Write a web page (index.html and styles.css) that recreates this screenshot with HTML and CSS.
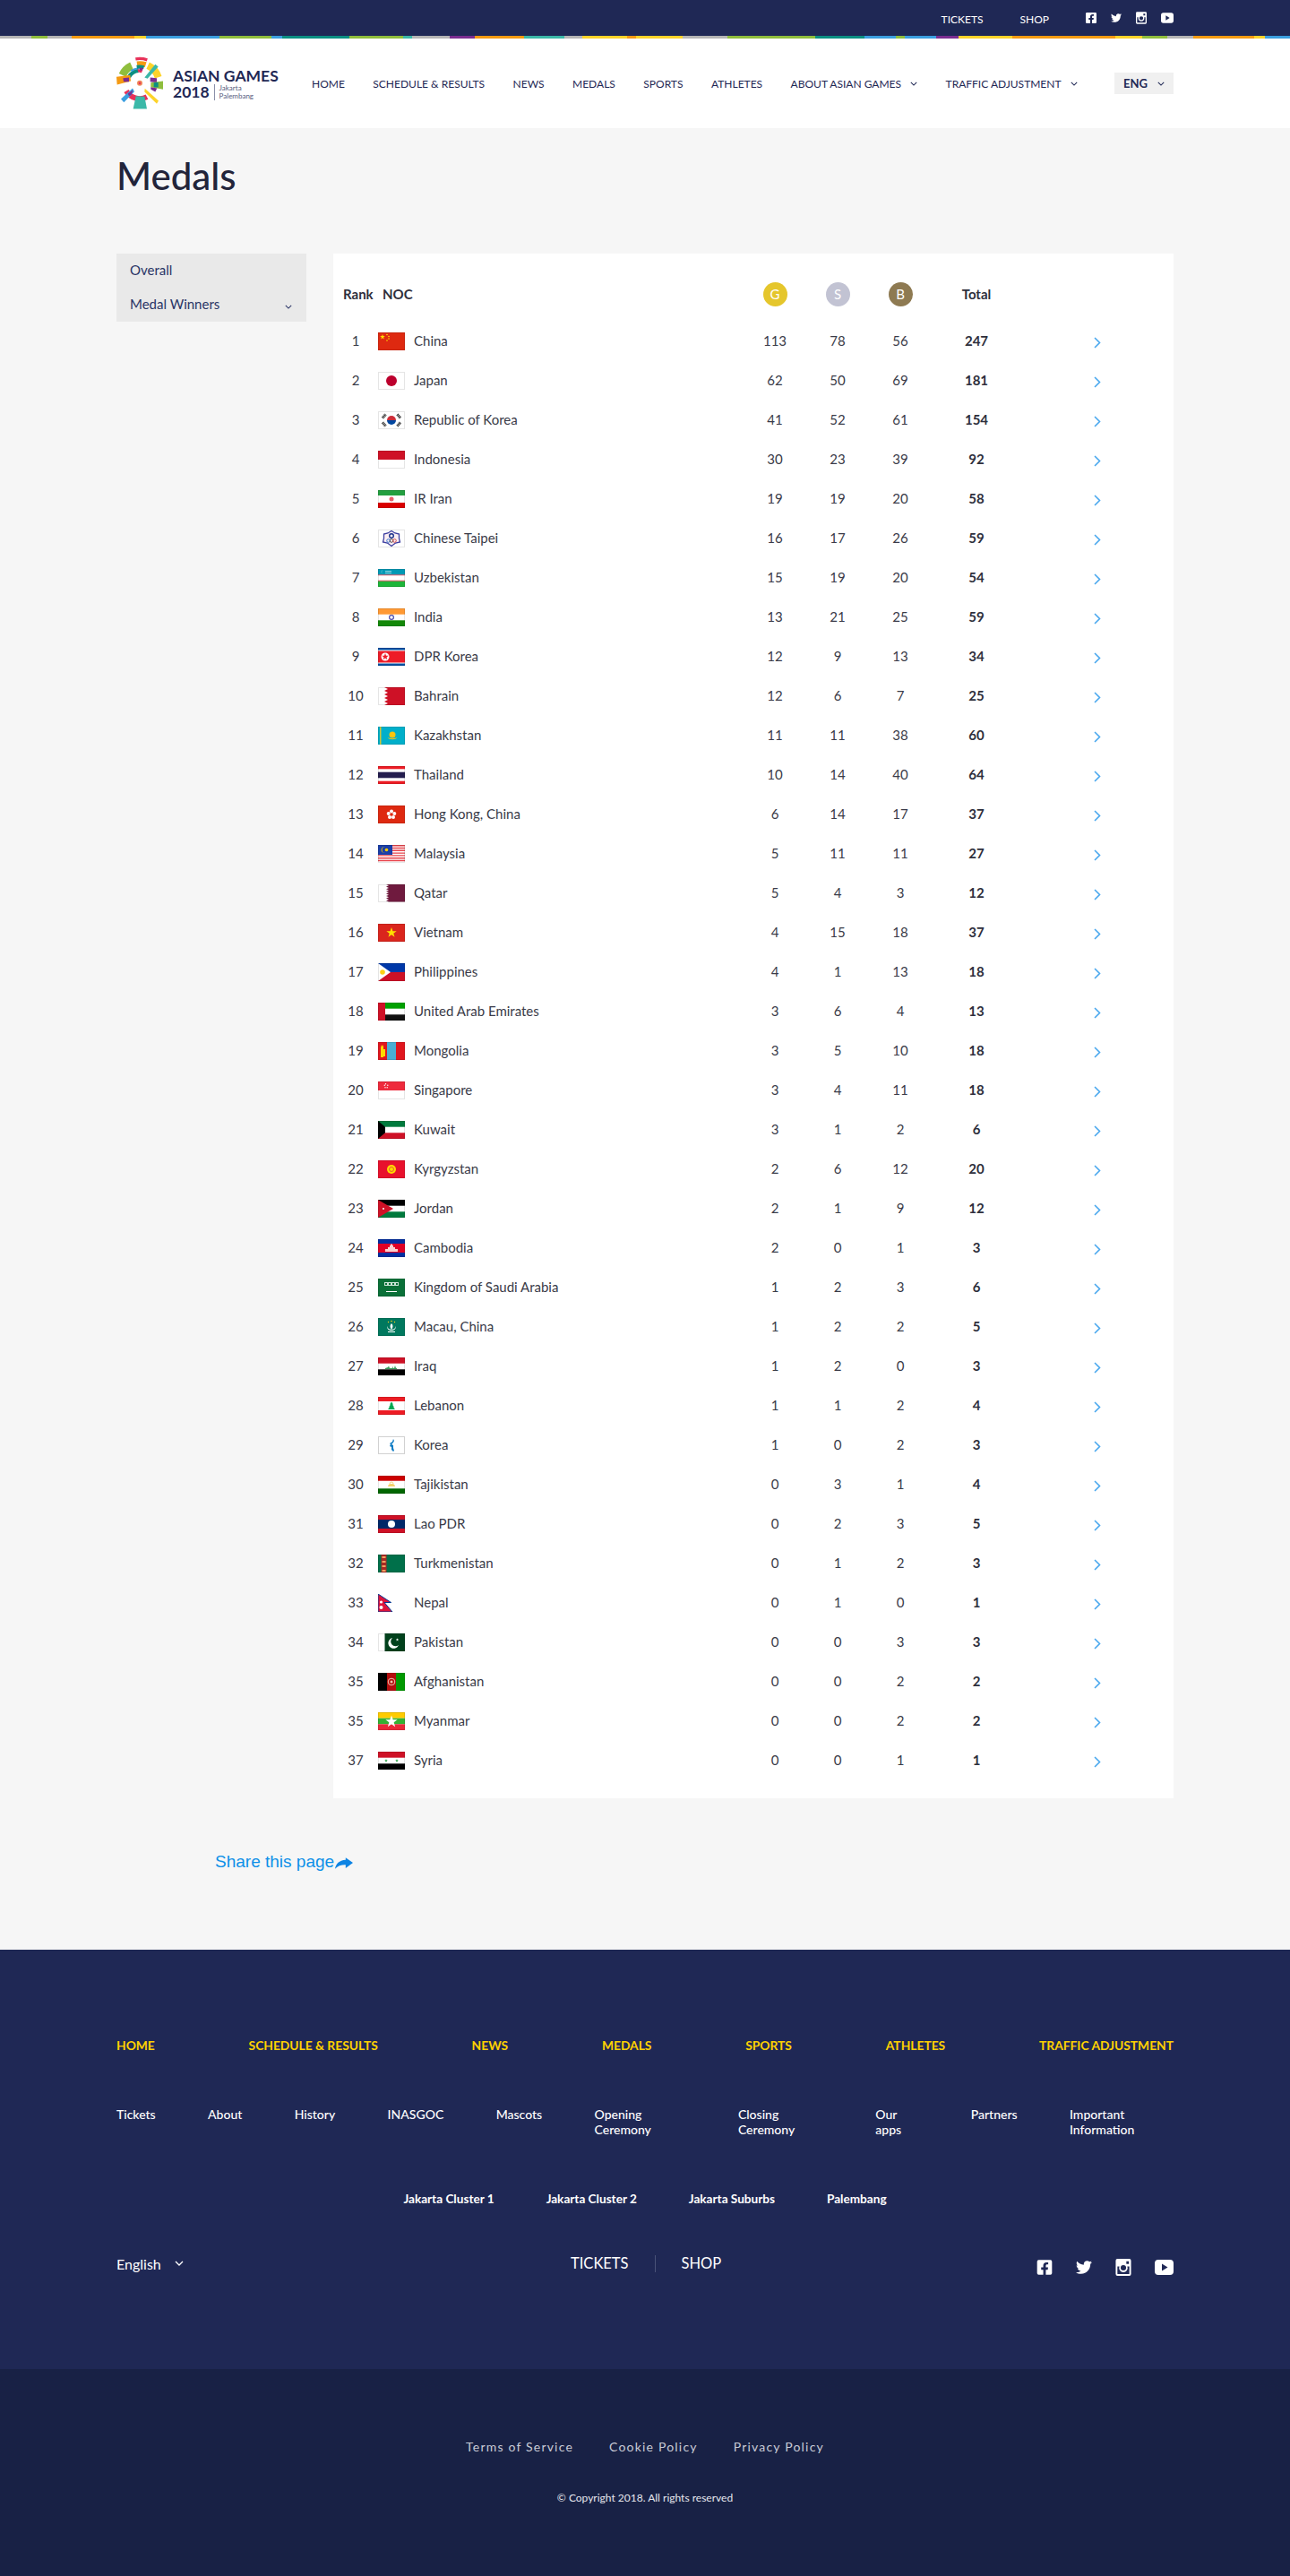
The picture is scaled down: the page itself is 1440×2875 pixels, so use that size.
FILE: index.html
```html
<!DOCTYPE html>
<html lang="en">
<head>
    <meta charset="UTF-8">
    <meta name="viewport" content="width=device-width, initial-scale=1.0">
    <title>Medals - Asian Games 2018</title>
    <link rel="stylesheet" href="styles.css">
</head>
<body>
    <svg class="sprite" xmlns="http://www.w3.org/2000/svg">
        <defs>
            <polygon id="star" points="0,-1 .24,-.31 .95,-.31 .38,.12 .59,.81 0,.38 -.59,.81 -.38,.12 -.95,-.31 -.24,-.31"/>
        </defs>
        <symbol id="i-fb" viewBox="0 0 448 512"><path d="M400 32H48A48 48 0 0 0 0 80v352a48 48 0 0 0 48 48h137.25V327.69h-63V256h63v-54.64c0-62.15 37-96.48 93.67-96.48 27.14 0 55.52 4.84 55.52 4.84v61h-31.27c-30.81 0-40.42 19.12-40.42 38.73V256h68.78l-11 71.69h-57.78V480H400a48 48 0 0 0 48-48V80a48 48 0 0 0-48-48z"/></symbol>
        <symbol id="i-tw" viewBox="0 0 512 512"><path d="M459.37 151.716c.325 4.548.325 9.097.325 13.645 0 138.72-105.583 298.558-298.558 298.558-59.452 0-114.68-17.219-161.137-47.106 8.447.974 16.568 1.299 25.34 1.299 49.055 0 94.213-16.568 130.274-44.832-46.132-.975-84.792-31.188-98.112-72.772 6.498.974 12.995 1.624 19.818 1.624 9.421 0 18.843-1.3 27.614-3.573-48.081-9.747-84.143-51.98-84.143-102.985v-1.299c13.969 7.797 30.214 12.67 47.431 13.319-28.264-18.843-46.781-51.005-46.781-87.391 0-19.492 5.197-37.36 14.294-52.954 51.655 63.675 129.3 105.258 216.365 109.807-1.624-7.797-2.599-15.918-2.599-24.04 0-57.828 46.782-104.934 104.934-104.934 30.213 0 57.502 12.67 76.67 33.137 23.715-4.548 46.456-13.32 66.599-25.34-7.798 24.366-24.366 44.833-46.132 57.827 21.117-2.273 41.584-8.122 60.426-16.243-14.292 20.791-32.161 39.308-52.628 54.253z"/></symbol>
        <symbol id="i-ig" viewBox="0 0 18 20"><path fill-rule="evenodd" d="M2 0h14a2 2 0 0 1 2 2v16a2 2 0 0 1-2 2H2a2 2 0 0 1-2-2V2a2 2 0 0 1 2-2zM12.500 3v3h3V3zM2 9v8.500a.5.5 0 0 0 .5.5h13a.5.5 0 0 0 .5-.5V9h-2.300a5 5 0 1 1-9.400 0zM9 7.300a3.200 3.200 0 1 0 0 6.400 3.200 3.200 0 0 0 0-6.400z"/></symbol>
        <symbol id="i-yt" viewBox="0 0 21 17"><path fill-rule="evenodd" d="M4 0h13a4 4 0 0 1 4 4v9a4 4 0 0 1-4 4H4a4 4 0 0 1-4-4V4a4 4 0 0 1 4-4zM8 4.500v8l6.500-4z"/></symbol>
        <symbol id="i-down" viewBox="0 0 10 6"><path d="M1 1l4 4 4-4" fill="none" stroke="currentColor" stroke-width="1.300"/></symbol>
        <symbol id="i-go" viewBox="0 0 8 13"><path d="M1 1l5.500 5.500L1 12" fill="none" stroke="currentColor" stroke-width="1.600"/></symbol>
    </svg>

    <div class="topbar">
        <div class="wrap topbar-in">
            <a class="top-link">TICKETS</a>
            <a class="top-link">SHOP</a>
            <div class="top-social">
                <svg class="ic-top"><use href="#i-fb"/></svg>
                <svg class="ic-top"><use href="#i-tw"/></svg>
                <svg class="ic-top"><use href="#i-ig"/></svg>
                <svg class="ic-top ic-top-yt"><use href="#i-yt"/></svg>
            </div>
        </div>
    </div>
    <div class="strip"></div>

    <header class="header">
        <div class="wrap header-in">
            <a class="logo">
                <svg class="logo-mark" viewBox="30 35 165 185">
                    <g fill="none">
                        <path stroke="#fdd32a" stroke-width="24" d="M135.500 68A65 65 0 0 1 170 107"/>
                        <path stroke="#f59a12" stroke-width="18" d="M99 63A65 65 0 0 1 128 65"/>
                        <path stroke="#e8325a" stroke-width="10" d="M94 46A82 82 0 0 1 133 49"/>
                        <path stroke="#8fbe3d" stroke-width="26" d="M50 100A64 64 0 0 1 81 69"/>
                        <path stroke="#0b8f82" stroke-width="13" d="M72 106A42 42 0 0 1 104 85"/>
                        <path stroke="#3b9fe0" stroke-width="6" d="M79 86A50 50 0 0 1 104 77"/>
                        <path stroke="#0b8f82" stroke-width="12" d="M98 73A55 55 0 0 1 122 74"/>
                        <path stroke="#e8325a" stroke-width="18" d="M132 173A52 52 0 0 1 63 153"/>
                    </g>
                    <polygon fill="#e8325a" points="100,80 118,82 114,92 103,90"/>
                    <polygon fill="#7b2d90" points="106,76 120,76 117,84 108,84"/>
                    <polygon fill="#3bb8a8" points="124,108 160,64 170,72 134,112"/>
                    <polygon fill="#f59a12" points="30,106 76,100 78,120 32,132"/>
                    <polygon fill="#7b2d90" points="52,110 72,108 72,122 54,122"/>
                    <polygon fill="#7b2d90" points="143,108 165,110 165,125 143,122"/>
                    <polygon fill="#8fbe3d" points="145,125 186,120 186,148 145,140"/>
                    <polygon fill="#0b8f82" points="155,125 170,124 170,141 155,140"/>
                    <polygon fill="#7b2d90" points="145,140 166,144 160,156 145,148"/>
                    <polygon fill="#3bb8a8" points="95,170 124,172 132,213 86,213"/>
                    <polygon fill="#3b9fe0" points="45,180 84,144 90,155 55,191"/>
                    <polygon fill="#7b2d90" points="68,162 85,150 80,166 72,170"/>
                    <polygon fill="#fdd32a" points="125,145 171,186 165,196 124,156"/>
                    <circle cx="108" cy="127" r="9" fill="#f08a5a"/>
                    <circle cx="108" cy="127" r="4" fill="#e8325a"/>
                </svg>
                <div class="logo-text">
                    <div class="logo-name">ASIAN GAMES</div>
                    <div class="logo-sub">
                        <span class="logo-year">2018</span>
                        <span class="logo-city">Jakarta<br>Palembang</span>
                    </div>
                </div>
            </a>
            <nav class="nav">
                <a>HOME</a>
                <a>SCHEDULE &amp; RESULTS</a>
                <a>NEWS</a>
                <a>MEDALS</a>
                <a>SPORTS</a>
                <a>ATHLETES</a>
                <a class="nav-more">ABOUT ASIAN GAMES <svg class="ic-down"><use href="#i-down"/></svg></a>
                <a class="nav-more">TRAFFIC ADJUSTMENT <svg class="ic-down"><use href="#i-down"/></svg></a>
            </nav>
            <div class="lang">ENG <svg class="ic-down"><use href="#i-down"/></svg></div>
        </div>
    </header>

    <main class="main">
        <div class="wrap">
            <h1 class="title">Medals</h1>
            <div class="columns">
                <aside class="side">
                    <a class="side-item">Overall</a>
                    <a class="side-item">Medal Winners <svg class="ic-down"><use href="#i-down"/></svg></a>
                </aside>
                <section class="card">
                    <div class="row row-head">
                        <div class="head-rank">Rank</div>
                        <div class="head-noc">NOC</div>
                        <div></div>
                        <div class="num"><span class="medal gold">G</span></div>
                        <div class="num"><span class="medal silver">S</span></div>
                        <div class="num"><span class="medal bronze">B</span></div>
                        <div class="num total">Total</div>
                        <div></div>
                    </div>

                    <div class="row">
                        <div class="num">1</div>
                        <svg class="flag" viewBox="0 0 30 20"><rect width="30" height="20" fill="#de2910"/><use href="#star" transform="translate(5 5) scale(3)" fill="#ffde00"/><circle cx="10" cy="2.500" r=".8" fill="#ffde00"/><circle cx="12" cy="4.500" r=".8" fill="#ffde00"/><circle cx="12" cy="7" r=".8" fill="#ffde00"/><circle cx="10" cy="9" r=".8" fill="#ffde00"/></svg>
                        <div class="name">China</div>
                        <div class="num">113</div><div class="num">78</div><div class="num">56</div><div class="num total">247</div>
                        <svg class="ic-go"><use href="#i-go"/></svg>
                    </div>
                    <div class="row">
                        <div class="num">2</div>
                        <svg class="flag" viewBox="0 0 30 20"><rect width="30" height="20" fill="#fff"/><circle cx="15" cy="10" r="6" fill="#bc002d"/></svg>
                        <div class="name">Japan</div>
                        <div class="num">62</div><div class="num">50</div><div class="num">69</div><div class="num total">181</div>
                        <svg class="ic-go"><use href="#i-go"/></svg>
                    </div>
                    <div class="row">
                        <div class="num">3</div>
                        <svg class="flag" viewBox="0 0 30 20"><rect width="30" height="20" fill="#fff"/><path d="M10 10a5 5 0 0 1 10 0z" fill="#cd2e3a"/><path d="M10 10a5 5 0 0 0 10 0z" fill="#0047a0"/><g stroke="#222" stroke-width="3" stroke-dasharray="1.100 .5"><path d="M5 7.500l3.500-4"/><path d="M21.500 3.500l3.500 4"/><path d="M5 12.500l3.500 4"/><path d="M21.500 16.500l3.500-4"/></g></svg>
                        <div class="name">Republic of Korea</div>
                        <div class="num">41</div><div class="num">52</div><div class="num">61</div><div class="num total">154</div>
                        <svg class="ic-go"><use href="#i-go"/></svg>
                    </div>
                    <div class="row">
                        <div class="num">4</div>
                        <svg class="flag" viewBox="0 0 30 20"><rect width="30" height="20" fill="#fff"/><rect width="30" height="10" fill="#ce1126"/></svg>
                        <div class="name">Indonesia</div>
                        <div class="num">30</div><div class="num">23</div><div class="num">39</div><div class="num total">92</div>
                        <svg class="ic-go"><use href="#i-go"/></svg>
                    </div>
                    <div class="row">
                        <div class="num">5</div>
                        <svg class="flag" viewBox="0 0 30 20"><rect width="30" height="20" fill="#fff"/><rect width="30" height="6" fill="#239f40"/><rect y="14" width="30" height="6" fill="#da0000"/><circle cx="15" cy="10" r="2.500" fill="#e8606a"/></svg>
                        <div class="name">IR Iran</div>
                        <div class="num">19</div><div class="num">19</div><div class="num">20</div><div class="num total">58</div>
                        <svg class="ic-go"><use href="#i-go"/></svg>
                    </div>
                    <div class="row">
                        <div class="num">6</div>
                        <svg class="flag" viewBox="0 0 30 20"><rect width="30" height="20" fill="#fff"/><path d="M15 1.500l4 2.500 4.500 1 0 5 1 4-5 1-4.500 3.500-4.500-3.500-5-1 1-4 0-5 4.500-1z" fill="#fbeef2" stroke="#3d3fa0" stroke-width="1.300"/><circle cx="15" cy="7" r="2.300" fill="none" stroke="#1a2f8a" stroke-width="1.400"/><g fill="none" stroke-width=".9"><circle cx="11.500" cy="12.500" r="1.800" stroke="#2a6fd0"/><circle cx="15" cy="12.500" r="1.800" stroke="#444"/><circle cx="18.500" cy="12.500" r="1.800" stroke="#d04040"/></g></svg>
                        <div class="name">Chinese Taipei</div>
                        <div class="num">16</div><div class="num">17</div><div class="num">26</div><div class="num total">59</div>
                        <svg class="ic-go"><use href="#i-go"/></svg>
                    </div>
                    <div class="row">
                        <div class="num">7</div>
                        <svg class="flag" viewBox="0 0 30 20"><rect width="30" height="20" fill="#fff"/><rect width="30" height="6.500" fill="#0099b5"/><rect y="13.500" width="30" height="6.500" fill="#1eb53a"/><rect y="6.500" width="30" height=".7" fill="#ce1126"/><rect y="12.800" width="30" height=".7" fill="#ce1126"/><path d="M5 1.200a2.200 2.200 0 0 0 0 4 2.500 2.500 0 0 1 0-4z" fill="#fff"/><path d="M8 2h7v.8H8zM8 4h7v.8H8z" fill="#bfe6ee"/></svg>
                        <div class="name">Uzbekistan</div>
                        <div class="num">15</div><div class="num">19</div><div class="num">20</div><div class="num total">54</div>
                        <svg class="ic-go"><use href="#i-go"/></svg>
                    </div>
                    <div class="row">
                        <div class="num">8</div>
                        <svg class="flag" viewBox="0 0 30 20"><rect width="30" height="20" fill="#fff"/><rect width="30" height="6.700" fill="#ff9933"/><rect y="13.300" width="30" height="6.700" fill="#138808"/><circle cx="15" cy="10" r="2.400" fill="none" stroke="#4a4aa8" stroke-width="1.200"/></svg>
                        <div class="name">India</div>
                        <div class="num">13</div><div class="num">21</div><div class="num">25</div><div class="num total">59</div>
                        <svg class="ic-go"><use href="#i-go"/></svg>
                    </div>
                    <div class="row">
                        <div class="num">9</div>
                        <svg class="flag" viewBox="0 0 30 20"><rect width="30" height="20" fill="#024fa2"/><rect y="2.500" width="30" height="15" fill="#fff"/><rect y="3.500" width="30" height="13" fill="#ed1c27"/><circle cx="8" cy="10" r="4.500" fill="#fff"/><use href="#star" transform="translate(8 10) scale(4)" fill="#ed1c27"/></svg>
                        <div class="name">DPR Korea</div>
                        <div class="num">12</div><div class="num">9</div><div class="num">13</div><div class="num total">34</div>
                        <svg class="ic-go"><use href="#i-go"/></svg>
                    </div>
                    <div class="row">
                        <div class="num">10</div>
                        <svg class="flag" viewBox="0 0 30 20"><rect width="30" height="20" fill="#fff"/><path d="M30 0H7L11 2 7 4l4 2-4 2 4 2-4 2 4 2-4 2 4 2-4 2h23z" fill="#ce1126"/></svg>
                        <div class="name">Bahrain</div>
                        <div class="num">12</div><div class="num">6</div><div class="num">7</div><div class="num total">25</div>
                        <svg class="ic-go"><use href="#i-go"/></svg>
                    </div>
                    <div class="row">
                        <div class="num">11</div>
                        <svg class="flag" viewBox="0 0 30 20"><rect width="30" height="20" fill="#00afca"/><rect x="2" width="1.500" height="20" fill="#c8c83c"/><circle cx="16" cy="9" r="3.500" fill="#fec50c"/><path d="M10.500 12c2 3 9 3 11 0-2 1.500-9 1.500-11 0z" fill="#fec50c"/></svg>
                        <div class="name">Kazakhstan</div>
                        <div class="num">11</div><div class="num">11</div><div class="num">38</div><div class="num total">60</div>
                        <svg class="ic-go"><use href="#i-go"/></svg>
                    </div>
                    <div class="row">
                        <div class="num">12</div>
                        <svg class="flag" viewBox="0 0 30 20"><rect width="30" height="20" fill="#ed1c24"/><rect y="3.300" width="30" height="13.400" fill="#fff"/><rect y="6.700" width="30" height="6.600" fill="#241d4f"/></svg>
                        <div class="name">Thailand</div>
                        <div class="num">10</div><div class="num">14</div><div class="num">40</div><div class="num total">64</div>
                        <svg class="ic-go"><use href="#i-go"/></svg>
                    </div>
                    <div class="row">
                        <div class="num">13</div>
                        <svg class="flag" viewBox="0 0 30 20"><rect width="30" height="20" fill="#de2910"/><g fill="#fff"><circle cx="15" cy="6.500" r="2"/><circle cx="18.300" cy="9" r="2"/><circle cx="17" cy="13" r="2"/><circle cx="13" cy="13" r="2"/><circle cx="11.700" cy="9" r="2"/></g></svg>
                        <div class="name">Hong Kong, China</div>
                        <div class="num">6</div><div class="num">14</div><div class="num">17</div><div class="num total">37</div>
                        <svg class="ic-go"><use href="#i-go"/></svg>
                    </div>
                    <div class="row">
                        <div class="num">14</div>
                        <svg class="flag" viewBox="0 0 30 20"><rect width="30" height="20" fill="#fff"/><path d="M0 .7h30M0 3.500h30M0 6.300h30M0 9.100h30M0 11.900h30M0 14.700h30M0 17.500h30" stroke="#e8444c" stroke-width="1.400"/><rect width="16" height="11" fill="#1a3fa8"/><path d="M8 2a3.600 3.600 0 1 0 0 7 3 3 0 1 1 0-7z" fill="#ffcc00"/><circle cx="9.500" cy="5.500" r="1.800" fill="#ffcc00"/></svg>
                        <div class="name">Malaysia</div>
                        <div class="num">5</div><div class="num">11</div><div class="num">11</div><div class="num total">27</div>
                        <svg class="ic-go"><use href="#i-go"/></svg>
                    </div>
                    <div class="row">
                        <div class="num">15</div>
                        <svg class="flag" viewBox="0 0 30 20"><rect width="30" height="20" fill="#fff"/><path d="M30 0H9l3 1.300-3 1.300 3 1.300-3 1.300 3 1.300-3 1.300 3 1.300-3 1.300 3 1.300-3 1.300 3 1.300-3 1.300 3 1.300-3 1.300 3 1.300H30z" fill="#6f1a3e"/></svg>
                        <div class="name">Qatar</div>
                        <div class="num">5</div><div class="num">4</div><div class="num">3</div><div class="num total">12</div>
                        <svg class="ic-go"><use href="#i-go"/></svg>
                    </div>
                    <div class="row">
                        <div class="num">16</div>
                        <svg class="flag" viewBox="0 0 30 20"><rect width="30" height="20" fill="#da251d"/><use href="#star" transform="translate(15 10) scale(6)" fill="#ffe000"/></svg>
                        <div class="name">Vietnam</div>
                        <div class="num">4</div><div class="num">15</div><div class="num">18</div><div class="num total">37</div>
                        <svg class="ic-go"><use href="#i-go"/></svg>
                    </div>
                    <div class="row">
                        <div class="num">17</div>
                        <svg class="flag" viewBox="0 0 30 20"><rect width="30" height="10" fill="#0038a8"/><rect y="10" width="30" height="10" fill="#ce1126"/><polygon points="0,0 14,10 0,20" fill="#fff"/><circle cx="5" cy="10" r="2.800" fill="#fcd116"/></svg>
                        <div class="name">Philippines</div>
                        <div class="num">4</div><div class="num">1</div><div class="num">13</div><div class="num total">18</div>
                        <svg class="ic-go"><use href="#i-go"/></svg>
                    </div>
                    <div class="row">
                        <div class="num">18</div>
                        <svg class="flag" viewBox="0 0 30 20"><rect width="30" height="20" fill="#fff"/><rect x="8" width="22" height="6.700" fill="#00a000"/><rect x="8" y="13.300" width="22" height="6.700" fill="#111"/><rect width="8" height="20" fill="#ce1126"/></svg>
                        <div class="name">United Arab Emirates</div>
                        <div class="num">3</div><div class="num">6</div><div class="num">4</div><div class="num total">13</div>
                        <svg class="ic-go"><use href="#i-go"/></svg>
                    </div>
                    <div class="row">
                        <div class="num">19</div>
                        <svg class="flag" viewBox="0 0 30 20"><rect width="30" height="20" fill="#4baed3"/><rect width="10" height="20" fill="#e0161e"/><rect x="20" width="10" height="20" fill="#e0161e"/><path d="M4 3l1 2 1-2v14H3V6z" fill="#ffd900"/><rect x="3" y="8" width="5" height="8" fill="#ffd900"/></svg>
                        <div class="name">Mongolia</div>
                        <div class="num">3</div><div class="num">5</div><div class="num">10</div><div class="num total">18</div>
                        <svg class="ic-go"><use href="#i-go"/></svg>
                    </div>
                    <div class="row">
                        <div class="num">20</div>
                        <svg class="flag" viewBox="0 0 30 20"><rect width="30" height="20" fill="#fff"/><rect width="30" height="10" fill="#ee2a3c"/><path d="M6.500 1.200a3.800 3.800 0 1 0 0 7.600 3.200 3.200 0 1 1 0-7.600z" fill="#fff"/><g fill="#fff"><circle cx="8.500" cy="2.800" r=".7"/><circle cx="10.800" cy="4.300" r=".7"/><circle cx="10.200" cy="6.800" r=".7"/><circle cx="8" cy="6.800" r=".7"/><circle cx="7.300" cy="4.300" r=".7"/></g></svg>
                        <div class="name">Singapore</div>
                        <div class="num">3</div><div class="num">4</div><div class="num">11</div><div class="num total">18</div>
                        <svg class="ic-go"><use href="#i-go"/></svg>
                    </div>
                    <div class="row">
                        <div class="num">21</div>
                        <svg class="flag" viewBox="0 0 30 20"><rect width="30" height="20" fill="#fff"/><rect width="30" height="6.700" fill="#007a3d"/><rect y="13.300" width="30" height="6.700" fill="#ce1126"/><polygon points="0,0 8,6.700 8,13.300 0,20" fill="#000"/></svg>
                        <div class="name">Kuwait</div>
                        <div class="num">3</div><div class="num">1</div><div class="num">2</div><div class="num total">6</div>
                        <svg class="ic-go"><use href="#i-go"/></svg>
                    </div>
                    <div class="row">
                        <div class="num">22</div>
                        <svg class="flag" viewBox="0 0 30 20"><rect width="30" height="20" fill="#e8112d"/><circle cx="15" cy="10" r="5" fill="#ffd700"/><circle cx="15" cy="10" r="2.500" fill="none" stroke="#e8602d" stroke-width="1"/></svg>
                        <div class="name">Kyrgyzstan</div>
                        <div class="num">2</div><div class="num">6</div><div class="num">12</div><div class="num total">20</div>
                        <svg class="ic-go"><use href="#i-go"/></svg>
                    </div>
                    <div class="row">
                        <div class="num">23</div>
                        <svg class="flag" viewBox="0 0 30 20"><rect width="30" height="20" fill="#fff"/><rect width="30" height="6.700" fill="#000"/><rect y="13.300" width="30" height="6.700" fill="#007a3d"/><polygon points="0,0 17,10 0,20" fill="#ce1126"/><circle cx="6" cy="10" r="1" fill="#fff"/></svg>
                        <div class="name">Jordan</div>
                        <div class="num">2</div><div class="num">1</div><div class="num">9</div><div class="num total">12</div>
                        <svg class="ic-go"><use href="#i-go"/></svg>
                    </div>
                    <div class="row">
                        <div class="num">24</div>
                        <svg class="flag" viewBox="0 0 30 20"><rect width="30" height="20" fill="#032ea1"/><rect y="5" width="30" height="10" fill="#e00025"/><path d="M8 14v-3h3V9h2V7h1V5.500h2V7h1v2h2v2h3v3z" fill="#fbd0d0"/></svg>
                        <div class="name">Cambodia</div>
                        <div class="num">2</div><div class="num">0</div><div class="num">1</div><div class="num total">3</div>
                        <svg class="ic-go"><use href="#i-go"/></svg>
                    </div>
                    <div class="row">
                        <div class="num">25</div>
                        <svg class="flag" viewBox="0 0 30 20"><rect width="30" height="20" fill="#0a7038"/><path d="M7 4h16v4H7z" fill="#cfe5d8"/><path d="M8 5h2v2H8zM12 5h2v2h-2zM16 5h2v2h-2zM20 5h2v2h-2z" fill="#0a7038"/><rect x="9" y="14" width="12" height="1" fill="#fff"/></svg>
                        <div class="name">Kingdom of Saudi Arabia</div>
                        <div class="num">1</div><div class="num">2</div><div class="num">3</div><div class="num total">6</div>
                        <svg class="ic-go"><use href="#i-go"/></svg>
                    </div>
                    <div class="row">
                        <div class="num">26</div>
                        <svg class="flag" viewBox="0 0 30 20"><rect width="30" height="20" fill="#00785e"/><path d="M15 6c2 2 2 4 0 7-2-3-2-5 0-7z" fill="#fff"/><path d="M10 9c1 3 3 4 5 4s4-1 5-4c0 3-2 5-5 5s-5-2-5-5z" fill="#fff"/><path d="M11 15h8v1h-8z" fill="#fff"/><g fill="#fbd116"><circle cx="15" cy="3.500" r=".8"/><circle cx="11.500" cy="4.500" r=".7"/><circle cx="18.500" cy="4.500" r=".7"/></g></svg>
                        <div class="name">Macau, China</div>
                        <div class="num">1</div><div class="num">2</div><div class="num">2</div><div class="num total">5</div>
                        <svg class="ic-go"><use href="#i-go"/></svg>
                    </div>
                    <div class="row">
                        <div class="num">27</div>
                        <svg class="flag" viewBox="0 0 30 20"><rect width="30" height="20" fill="#fff"/><rect width="30" height="6.700" fill="#ce1126"/><rect y="13.300" width="30" height="6.700" fill="#000"/><path d="M8 12l3-1 1-1.500 1 2.500h3v-2.500l1 2.500h1l1-3 1 3h1v1H8z" fill="#3a9a5a"/></svg>
                        <div class="name">Iraq</div>
                        <div class="num">1</div><div class="num">2</div><div class="num">0</div><div class="num total">3</div>
                        <svg class="ic-go"><use href="#i-go"/></svg>
                    </div>
                    <div class="row">
                        <div class="num">28</div>
                        <svg class="flag" viewBox="0 0 30 20"><rect width="30" height="20" fill="#fff"/><rect width="30" height="5" fill="#ed1c24"/><rect y="15" width="30" height="5" fill="#ed1c24"/><path d="M15 5.500l2 3-1 0 2 3-1 0 2 2.500h-8l2-2.500-1 0 2-3-1 0z" fill="#00a651"/></svg>
                        <div class="name">Lebanon</div>
                        <div class="num">1</div><div class="num">1</div><div class="num">2</div><div class="num total">4</div>
                        <svg class="ic-go"><use href="#i-go"/></svg>
                    </div>
                    <div class="row">
                        <div class="num">29</div>
                        <svg class="flag flag-edge" viewBox="0 0 30 20"><rect width="30" height="20" fill="#fff"/><path d="M17 3l-1 3-3 2 1 1-1 2 2 1 0 3 2 2 1-1-1-3 0-3-2-1 2-2 1-2z" fill="#0f7cc4"/></svg>
                        <div class="name">Korea</div>
                        <div class="num">1</div><div class="num">0</div><div class="num">2</div><div class="num total">3</div>
                        <svg class="ic-go"><use href="#i-go"/></svg>
                    </div>
                    <div class="row">
                        <div class="num">30</div>
                        <svg class="flag" viewBox="0 0 30 20"><rect width="30" height="20" fill="#fff"/><rect width="30" height="5.700" fill="#cc0000"/><rect y="14.300" width="30" height="5.700" fill="#006600"/><path d="M11 12c0-4 8-4 8 0z" fill="#f4d26a"/><circle cx="15" cy="9" r="2" fill="none" stroke="#f4d26a" stroke-width=".8"/></svg>
                        <div class="name">Tajikistan</div>
                        <div class="num">0</div><div class="num">3</div><div class="num">1</div><div class="num total">4</div>
                        <svg class="ic-go"><use href="#i-go"/></svg>
                    </div>
                    <div class="row">
                        <div class="num">31</div>
                        <svg class="flag" viewBox="0 0 30 20"><rect width="30" height="20" fill="#ce1126"/><rect y="5" width="30" height="10" fill="#002868"/><circle cx="15" cy="10" r="4" fill="#fff"/></svg>
                        <div class="name">Lao PDR</div>
                        <div class="num">0</div><div class="num">2</div><div class="num">3</div><div class="num total">5</div>
                        <svg class="ic-go"><use href="#i-go"/></svg>
                    </div>
                    <div class="row">
                        <div class="num">32</div>
                        <svg class="flag" viewBox="0 0 30 20"><rect width="30" height="20" fill="#00704a"/><rect x="3.500" width="6" height="20" fill="#a62a24"/><path d="M4.500 2h4v2h-4zM4.500 7h4v2h-4zM4.500 12h4v2h-4zM4.500 17h4v2h-4z" fill="#f0a060"/><path d="M13.500 2a2.500 2.500 0 1 0 3 3.500 2.500 2.500 0 1 1-3-3.500z" fill="#fff"/></svg>
                        <div class="name">Turkmenistan</div>
                        <div class="num">0</div><div class="num">1</div><div class="num">2</div><div class="num total">3</div>
                        <svg class="ic-go"><use href="#i-go"/></svg>
                    </div>
                    <div class="row">
                        <div class="num">33</div>
                        <svg class="flag flag-bare" viewBox="0 0 30 20"><path d="M0 0l14.500 9.500H7L16 20H0z" fill="#dc143c" stroke="#003893" stroke-width="1"/><circle cx="3.500" cy="9" r="1.600" fill="#fff"/><circle cx="3.500" cy="15" r="2" fill="#fff"/></svg>
                        <div class="name">Nepal</div>
                        <div class="num">0</div><div class="num">1</div><div class="num">0</div><div class="num total">1</div>
                        <svg class="ic-go"><use href="#i-go"/></svg>
                    </div>
                    <div class="row">
                        <div class="num">34</div>
                        <svg class="flag" viewBox="0 0 30 20"><rect width="30" height="20" fill="#fff"/><rect x="7.500" width="22.500" height="20" fill="#01411c"/><path d="M16 5a6 6 0 1 0 7 8 5 5 0 1 1-7-8z" fill="#fff"/><use href="#star" transform="translate(21.500 7) scale(1.800)" fill="#fff"/></svg>
                        <div class="name">Pakistan</div>
                        <div class="num">0</div><div class="num">0</div><div class="num">3</div><div class="num total">3</div>
                        <svg class="ic-go"><use href="#i-go"/></svg>
                    </div>
                    <div class="row">
                        <div class="num">35</div>
                        <svg class="flag" viewBox="0 0 30 20"><rect width="10" height="20" fill="#000"/><rect x="10" width="10" height="20" fill="#b30d0d"/><rect x="20" width="10" height="20" fill="#009900"/><circle cx="15" cy="10" r="3.800" fill="none" stroke="#eec4b0" stroke-width="1"/><circle cx="15" cy="10" r="1.500" fill="#eec4b0"/></svg>
                        <div class="name">Afghanistan</div>
                        <div class="num">0</div><div class="num">0</div><div class="num">2</div><div class="num total">2</div>
                        <svg class="ic-go"><use href="#i-go"/></svg>
                    </div>
                    <div class="row">
                        <div class="num">35</div>
                        <svg class="flag" viewBox="0 0 30 20"><rect width="30" height="6.700" fill="#fecb00"/><rect y="6.700" width="30" height="6.600" fill="#34b233"/><rect y="13.300" width="30" height="6.700" fill="#ea2839"/><use href="#star" transform="translate(15 10.500) scale(7)" fill="#fff"/></svg>
                        <div class="name">Myanmar</div>
                        <div class="num">0</div><div class="num">0</div><div class="num">2</div><div class="num total">2</div>
                        <svg class="ic-go"><use href="#i-go"/></svg>
                    </div>
                    <div class="row">
                        <div class="num">37</div>
                        <svg class="flag" viewBox="0 0 30 20"><rect width="30" height="20" fill="#fff"/><rect width="30" height="6.700" fill="#ce1126"/><rect y="13.300" width="30" height="6.700" fill="#000"/><use href="#star" transform="translate(9 10) scale(2)" fill="#239f40"/><use href="#star" transform="translate(21 10) scale(2)" fill="#239f40"/></svg>
                        <div class="name">Syria</div>
                        <div class="num">0</div><div class="num">0</div><div class="num">1</div><div class="num total">1</div>
                        <svg class="ic-go"><use href="#i-go"/></svg>
                    </div>
                </section>
            </div>
            <a class="share">Share this page
                <svg class="ic-share" viewBox="0 0 22 14"><path d="M13 0l9 6.500-9 6.500V9C8 8.800 3.500 10 0 14c1-6 5-10.500 13-11z"/></svg>
            </a>
        </div>
    </main>

    <footer>
        <div class="foot-top">
            <div class="wrap">
                <div class="foot-main">
                    <a>HOME</a>
                    <a>SCHEDULE &amp; RESULTS</a>
                    <a>NEWS</a>
                    <a>MEDALS</a>
                    <a>SPORTS</a>
                    <a>ATHLETES</a>
                    <a>TRAFFIC ADJUSTMENT</a>
                </div>
                <div class="foot-links">
                    <a>Tickets</a>
                    <a>About</a>
                    <a>History</a>
                    <a>INASGOC</a>
                    <a>Mascots</a>
                    <a class="w-open">Opening Ceremony</a>
                    <a class="w-close">Closing Ceremony</a>
                    <a class="w-apps">Our<br>apps</a>
                    <a>Partners</a>
                    <a class="w-info">Important Information</a>
                </div>
                <div class="foot-cities">
                    <a>Jakarta Cluster 1</a>
                    <a>Jakarta Cluster 2</a>
                    <a>Jakarta Suburbs</a>
                    <a>Palembang</a>
                </div>
                <div class="foot-row">
                    <div class="foot-lang">English <svg class="ic-down"><use href="#i-down"/></svg></div>
                    <div class="foot-shop">
                        <a>TICKETS</a>
                        <span class="foot-sep"></span>
                        <a>SHOP</a>
                    </div>
                    <div class="foot-social">
                        <svg class="ic-foot"><use href="#i-fb"/></svg>
                        <svg class="ic-foot"><use href="#i-tw"/></svg>
                        <svg class="ic-foot"><use href="#i-ig"/></svg>
                        <svg class="ic-foot ic-foot-yt"><use href="#i-yt"/></svg>
                    </div>
                </div>
            </div>
        </div>
        <div class="foot-bottom">
            <div class="legal">
                <a>Terms of Service</a>
                <a>Cookie Policy</a>
                <a>Privacy Policy</a>
            </div>
            <div class="copy">© Copyright 2018. All rights reserved</div>
        </div>
    </footer>
</body>
</html>
```

FILE: styles.css
```css
* {
    box-sizing: border-box;
}

body {
    margin: 0;
    font-family: 'Lato', 'Open Sans', sans-serif;
    background-color: #f6f6f6;
    color: #3a3b48;
}

.sprite {
    display: none;
}

.wrap {
    width: 1180px;
    margin: 0 auto;
}

/* top bar */
.topbar {
    height: 40px;
    background-color: #1f2855;
}

.topbar-in {
    height: 40px;
    display: flex;
    justify-content: flex-end;
    align-items: center;
    padding-top: 2px;
}

.top-link {
    color: #fff;
    font-size: 12px;
    margin-right: 41px;
}

.top-social {
    display: flex;
    gap: 16px;
    align-items: center;
    margin-bottom: 2px;
}

.ic-top {
    width: 12px;
    height: 14px;
    fill: #fff;
    display: block;
}

.ic-top-yt {
    width: 14px;
}

.strip {
    height: 3px;
    background: linear-gradient(to right,
        #b5b5b5 35px, #8fbe3d 35px, #8fbe3d 53px, #b5b5b5 53px, #b5b5b5 80px,
        #f59a12 80px, #f59a12 150px, #fdd32a 150px, #fdd32a 163px,
        #3b9fe0 163px, #3b9fe0 245px, #8fbe3d 245px, #8fbe3d 303px,
        #3b9fe0 303px, #3b9fe0 315px, #0b8f82 315px, #0b8f82 390px,
        #8fbe3d 390px, #8fbe3d 450px, #3bb8a8 450px, #3bb8a8 460px,
        #b5b5b5 460px, #b5b5b5 502px, #7b2d90 502px, #7b2d90 530px,
        #f59a12 530px, #f59a12 585px, #3bb8a8 585px, #3bb8a8 630px,
        #b5b5b5 630px, #b5b5b5 650px, #fdd32a 650px, #fdd32a 700px,
        #f59a12 700px, #f59a12 710px, #fdd32a 710px, #fdd32a 762px,
        #b5b5b5 762px, #b5b5b5 812px, #8fbe3d 812px, #8fbe3d 910px,
        #0b8f82 910px, #0b8f82 965px, #3b9fe0 965px, #3b9fe0 1000px,
        #8fbe3d 1000px, #8fbe3d 1010px, #3b9fe0 1010px, #3b9fe0 1045px,
        #7b2d90 1045px, #7b2d90 1070px, #fdd32a 1070px, #fdd32a 1130px,
        #f59a12 1130px, #f59a12 1245px, #fdd32a 1245px, #fdd32a 1275px,
        #8fbe3d 1275px, #8fbe3d 1303px, #b5b5b5 1303px, #b5b5b5 1332px,
        #f59a12 1332px, #f59a12 1400px, #fdd32a 1400px, #fdd32a 1412px,
        #3b9fe0 1412px);
}

/* header */
.header {
    height: 100px;
    background-color: #fff;
}

.header-in {
    height: 100px;
    display: flex;
    align-items: center;
}

.logo {
    display: flex;
    align-items: center;
    width: 218px;
    color: #1f2855;
}

.logo-mark {
    width: 55px;
    height: 62px;
    display: block;
    flex: none;
}

.logo-text {
    margin-left: 8px;
}

.logo-name {
    font-size: 17.5px;
    font-weight: 700;
    line-height: 19px;
    white-space: nowrap;
}

.logo-sub {
    display: flex;
    align-items: center;
}

.logo-year {
    font-size: 17.5px;
    font-weight: 700;
    line-height: 18px;
}

.logo-city {
    font-size: 8px;
    line-height: 9px;
    margin-left: 5px;
    padding-left: 5px;
    border-left: 1px solid #8a8fa8;
    color: #555b7d;
}

.nav {
    display: flex;
    gap: 31.500px;
    align-items: center;
    font-size: 12px;
    color: #1f2855;
    white-space: nowrap;
}

.nav-more {
    display: flex;
    align-items: center;
}

.ic-down {
    width: 8px;
    height: 5px;
    display: block;
    color: #1f2855;
    margin-left: 10px;
}

.lang {
    width: 66px;
    height: 24px;
    margin-left: auto;
    background-color: #f0f0f0;
    display: flex;
    align-items: center;
    padding-left: 10px;
    font-size: 13px;
    font-weight: 700;
    color: #1f2855;
}

.lang .ic-down {
    margin-left: 11px;
}

/* main */
.main {
    height: 2033px;
}

.title {
    margin: 0;
    height: 140px;
    padding-top: 27px;
    font-size: 42px;
    line-height: 52px;
    font-weight: 500;
    color: #22243a;
}

.columns {
    display: flex;
    gap: 30px;
    align-items: flex-start;
}

.side {
    width: 212px;
    height: 76px;
    background-color: #e9e9e9;
    color: #2a3566;
    font-size: 15px;
}

.side-item {
    height: 38px;
    padding: 0 15px 2px;
    display: flex;
    align-items: center;
    justify-content: space-between;
}

.side-item .ic-down {
    margin-top: 6px;
    margin-right: 1px;
    color: #2a3566;
}

.card {
    width: 938px;
    padding-bottom: 21px;
    background-color: #fff;
}

.row {
    display: grid;
    grid-template-columns: 50px 30px 378px 70px 70px 70px 100px 170px;
    height: 44px;
    align-items: center;
    font-size: 15px;
}

.row-head {
    height: 75px;
    padding: 31px 0 16px;
    font-weight: 700;
    color: #2e2f3c;
}

.head-rank {
    padding-left: 11px;
    white-space: nowrap;
}

.head-noc {
    padding-left: 5px;
}

.num {
    text-align: center;
}

.total {
    font-weight: 700;
    color: #2e2f3c;
}

.name {
    padding-left: 10px;
    white-space: nowrap;
}

.medal {
    display: inline-block;
    width: 27px;
    height: 27px;
    border-radius: 50%;
    line-height: 27px;
    color: #fff;
    font-weight: 400;
}

.gold {
    background-color: #e5c62c;
}

.silver {
    background-color: #c2c3d3;
}

.bronze {
    background-color: #8e7a52;
}

.flag {
    width: 30px;
    height: 20px;
    display: block;
    margin-top: 2px;
    outline: 1px solid rgba(0, 0, 0, 0.1);
    outline-offset: -1px;
}

.flag-bare {
    outline: none;
}

.flag-edge {
    outline-color: rgba(0, 0, 0, 0.18);
}

.ic-go {
    width: 8px;
    height: 13px;
    display: block;
    margin: 4px 0 0 81px;
    color: #4aa8ee;
}

.share {
    display: flex;
    align-items: center;
    gap: 1px;
    margin: 59px 0 0 110px;
    font-family: 'Liberation Sans', Arial, sans-serif;
    font-size: 19px;
    line-height: 24px;
    color: #0d90e8;
}

.ic-share {
    width: 20px;
    height: 13px;
    fill: #0d84e4;
    margin-top: 3px;
}

/* footer */
.foot-top {
    height: 468px;
    padding-top: 97px;
    background-color: #1f2855;
    color: #fff;
}

.foot-main {
    display: flex;
    justify-content: space-between;
    font-size: 13.800px;
    font-weight: 700;
    line-height: 20px;
    color: #ffd200;
}

.foot-links {
    display: flex;
    gap: 58.400px;
    margin-top: 58px;
    height: 34px;
    font-size: 14px;
    font-weight: 500;
    line-height: 17px;
}

.w-open {
    width: 102px;
}

.w-close {
    width: 95px;
}

.w-apps {
    width: 48px;
}

.w-info {
    width: 90px;
}

.foot-cities {
    display: flex;
    justify-content: center;
    gap: 58px;
    margin-top: 59px;
    font-size: 13.600px;
    font-weight: 700;
    line-height: 20px;
}

.foot-row {
    display: flex;
    align-items: center;
    height: 24px;
    margin-top: 50px;
}

.foot-lang {
    display: flex;
    align-items: center;
    font-size: 16px;
    width: 507px;
}

.foot-lang .ic-down {
    color: #fff;
    margin-left: 15px;
    width: 10px;
    height: 6px;
}

.foot-shop {
    display: flex;
    align-items: center;
    font-size: 16.500px;
}

.foot-sep {
    width: 1px;
    height: 19px;
    margin: 0 29px;
    background-color: #4a5278;
}

.foot-social {
    display: flex;
    align-items: center;
    gap: 26px;
    margin-left: auto;
    margin-top: 8px;
}

.ic-foot {
    width: 18px;
    height: 19px;
    fill: #fff;
    display: block;
}

.ic-foot-yt {
    width: 21px;
    height: 17px;
}

.foot-bottom {
    height: 231px;
    padding-top: 77px;
    background-color: #182145;
    text-align: center;
}

.legal {
    display: flex;
    justify-content: center;
    gap: 40px;
    font-size: 14px;
    line-height: 20px;
    letter-spacing: 1.200px;
    color: #c8cbd6;
}

.copy {
    margin-top: 39px;
    font-size: 12px;
    line-height: 16px;
    color: #e6e7ee;
}
```
